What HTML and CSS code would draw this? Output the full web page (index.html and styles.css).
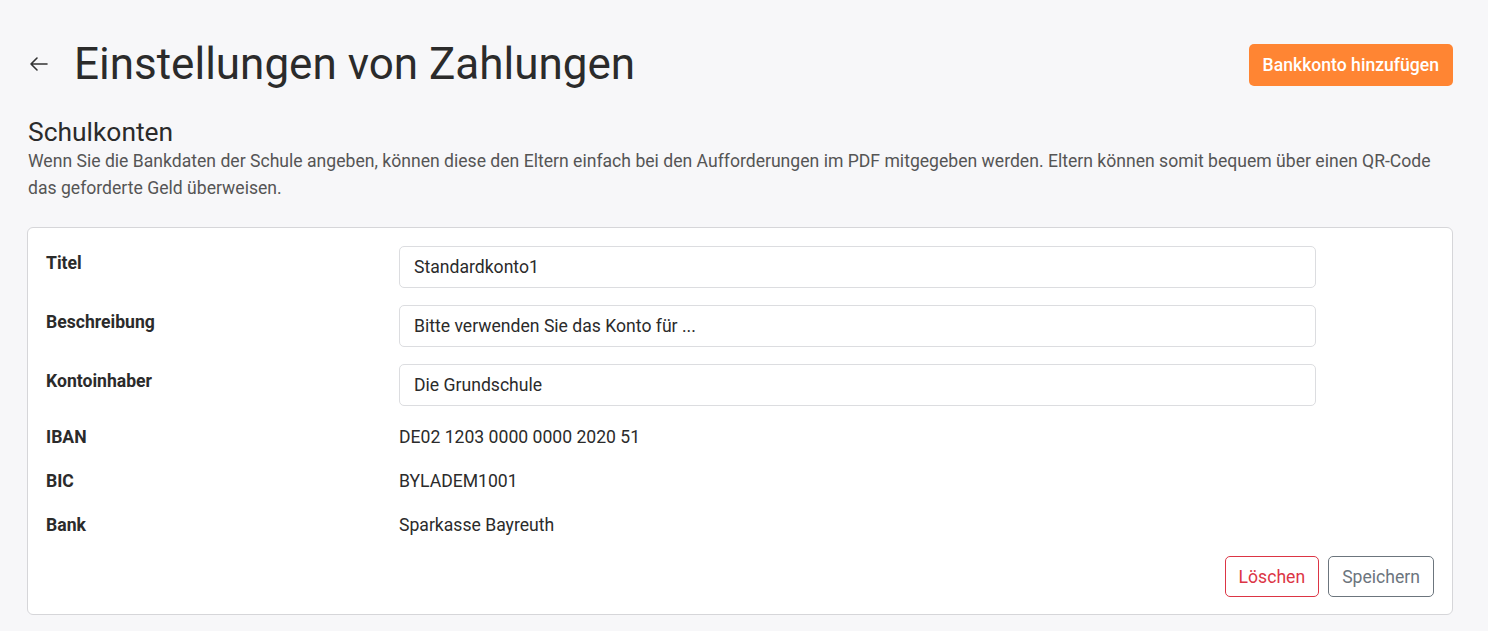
FILE: index.html
```html
<!DOCTYPE html>
<html lang="de">
  <head>
    <title>Einstellungen von Zahlungen</title>
    <link rel="stylesheet" href="styles.css">
  </head>
  <body>
    <div class="page">
      <div class="header">
        <div class="headline">
          <a class="back" href="#">
            <svg width="22" height="22" viewBox="0 0 22 22">
              <path d="M19 11H3M9 5l-6 6 6 6" fill="none" stroke="#333" stroke-width="1.6" stroke-linecap="round" stroke-linejoin="round" />
            </svg>
          </a>
          <h1>Einstellungen von Zahlungen</h1>
        </div>
        <button class="btnOrange">Bankkonto hinzufügen</button>
      </div>

      <h2>Schulkonten</h2>
      <p class="intro">
        Wenn Sie die Bankdaten der Schule angeben, können diese den Eltern einfach bei den Aufforderungen im PDF mitgegeben werden. Eltern können somit bequem über einen QR-Code das geforderte Geld überweisen.
      </p>

      <div class="card">
        <div class="row">
          <label>Titel</label>
          <input type="text" value="Standardkonto1" />
        </div>
        <div class="row">
          <label>Beschreibung</label>
          <input type="text" value="Bitte verwenden Sie das Konto für ..." />
        </div>
        <div class="row">
          <label>Kontoinhaber</label>
          <input type="text" value="Die Grundschule" />
        </div>
        <div class="row static">
          <label>IBAN</label>
          <span>DE02 1203 0000 0000 2020 51</span>
        </div>
        <div class="row static">
          <label>BIC</label>
          <span>BYLADEM1001</span>
        </div>
        <div class="row static">
          <label>Bank</label>
          <span>Sparkasse Bayreuth</span>
        </div>
        <div class="actions">
          <button class="btnDanger">Löschen</button>
          <button class="btnGray">Speichern</button>
        </div>
      </div>
    </div>
  </body>
</html>
```

FILE: styles.css
```css
body {
  margin: 0;
  background-color: #f7f7f9;
  font-family: Roboto, "Liberation Sans", sans-serif;
  color: #2b2b2b;
}
.page {
  padding: 40px 35px 0 27px;
}
.header {
  display: flex;
  justify-content: space-between;
  align-items: center;
}
.headline {
  display: flex;
  align-items: center;
  gap: 24px;
}
.back {
  display: flex;
  margin-left: 1px;
}
h1 {
  margin: 0;
  font-size: 44px;
  font-weight: 400;
  line-height: 48px;
}
.btnOrange {
  background-color: #ff8533;
  color: #fff;
  border: none;
  border-radius: 5px;
  height: 42px;
  padding: 0 14px;
  font-family: inherit;
  font-size: 17.6px;
  font-weight: 500;
  margin-top: 1px;
}
h2 {
  margin: 30px 0 0 1px;
  font-size: 26.4px;
  font-weight: 400;
  line-height: 29px;
}
.intro {
  margin: 1px 0 0 1px;
  font-size: 17.6px;
  line-height: 27px;
  color: #555;
}
.card {
  margin-top: 25px;
  background-color: #fff;
  border: 1px solid #d6d6d9;
  border-radius: 6px;
  padding: 18px 18px 17px 18px;
  display: flex;
  flex-direction: column;
  gap: 17px;
}
.row {
  display: grid;
  grid-template-columns: 353px 917px;
  font-size: 17.6px;
}
.row label {
  font-weight: 700;
  line-height: 24px;
  padding-top: 5px;
}
.row input {
  height: 42px;
  box-sizing: border-box;
  border: 1px solid #dcdde0;
  border-radius: 5px;
  padding: 0 14px;
  font-family: inherit;
  font-size: 17.6px;
  color: #2b2b2b;
}
.row.static {
  line-height: 27px;
  padding-top: 1px;
  margin-bottom: -1px;
}
.row.static label {
  padding-top: 0;
  line-height: 27px;
}
.actions {
  display: flex;
  justify-content: flex-end;
  gap: 9px;
  margin-top: 1px;
}
.actions button {
  height: 41px;
  background-color: #fff;
  border-radius: 5px;
  font-family: inherit;
  font-size: 17.6px;
  padding: 0 13px;
}
.btnDanger {
  border: 1px solid #dc3545;
  color: #dc3545;
}
.btnGray {
  border: 1px solid #6c757d;
  color: #6c757d;
}
```
